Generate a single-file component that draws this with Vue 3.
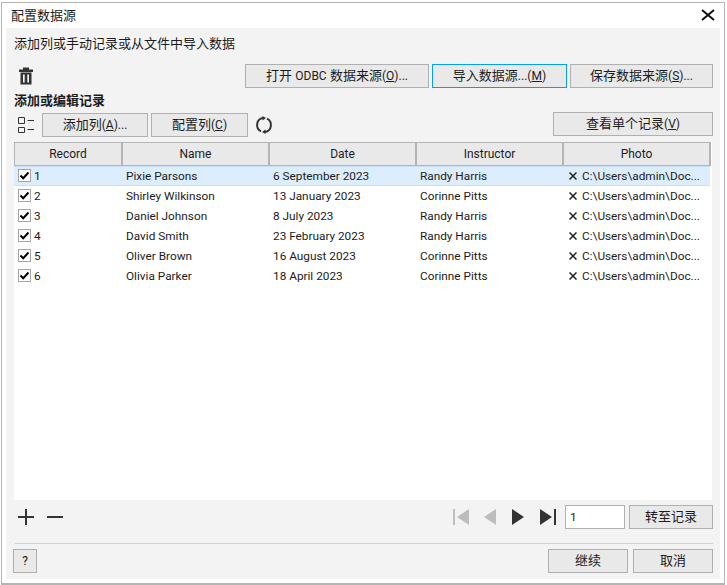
<script setup>
const columns = [
  { label: 'Record', width: 109 },
  { label: 'Name', width: 147 },
  { label: 'Date', width: 147 },
  { label: 'Instructor', width: 147 },
  { label: 'Photo', width: 147 }
]
const rows = [
  { id: 1, name: 'Pixie Parsons', date: '6 September 2023', instructor: 'Randy Harris' },
  { id: 2, name: 'Shirley Wilkinson', date: '13 January 2023', instructor: 'Corinne Pitts' },
  { id: 3, name: 'Daniel Johnson', date: '8 July 2023', instructor: 'Randy Harris' },
  { id: 4, name: 'David Smith', date: '23 February 2023', instructor: 'Randy Harris' },
  { id: 5, name: 'Oliver Brown', date: '16 August 2023', instructor: 'Corinne Pitts' },
  { id: 6, name: 'Olivia Parker', date: '18 April 2023', instructor: 'Corinne Pitts' }
]
</script>

<template>
  <div class="window">
    <header class="titlebar">
      <span class="title">配置数据源</span>
      <svg class="close" width="14" height="12" viewBox="0 0 14 12"><path d="M1 1L13 11M13 1L1 11" stroke="#111" stroke-width="2" fill="none" /></svg>
    </header>
    <main class="body">
      <p class="intro">添加列或手动记录或从文件中导入数据</p>
      <div class="source-row">
        <svg class="trash" width="16" height="18" viewBox="0 0 16 18">
          <path d="M1 2.500H15V5H1ZM5 0.500H11V2.500H5Z" fill="#333" />
          <path fill-rule="evenodd" d="M2.500 5.500H13.500V17.500H2.500ZM5 7.500V15.500H6.700V7.500ZM9.300 7.500V15.500H11V7.500Z" fill="#333" />
        </svg>
        <button class="btn odbc">打开 <span class="lat">ODBC</span> 数据来源<span class="lat">(<u>O</u>)...</span></button>
        <button class="btn import">导入数据源<span class="lat">...(<u>M</u>)</span></button>
        <button class="btn save">保存数据来源<span class="lat">(<u>S</u>)...</span></button>
      </div>
      <h2 class="section">添加或编辑记录</h2>
      <div class="tool-row">
        <svg class="list" width="16" height="16" viewBox="0 0 16 16">
          <path d="M0.500 0.500H6.500V6.500H0.500ZM0.500 10.500H6.500V15.500H0.500ZM9.500 3.500H16M9.500 12.500H16" stroke="#333" fill="none" />
        </svg>
        <button class="btn add">添加列<span class="lat">(<u>A</u>)...</span></button>
        <button class="btn config">配置列<span class="lat">(<u>C</u>)</span></button>
        <svg class="refresh" width="18" height="18" viewBox="0 0 18 18">
          <path d="M8 2.100A7 7 0 0 0 6 15.300M12 2.700A7 7 0 0 1 10 15.900" stroke="#333" stroke-width="2" fill="none" />
          <path d="M7.500 0L11 2L7.500 4.500ZM10.500 18L7 16L10.500 13.500Z" fill="#333" />
        </svg>
        <button class="btn single">查看单个记录<span class="lat">(<u>V</u>)</span></button>
      </div>
      <section class="table">
        <div class="thead">
          <div v-for="c in columns" :key="c.label" class="th" :style="{ width: c.width + 'px' }">{{ c.label }}</div>
        </div>
        <div v-for="r in rows" :key="r.id" class="tr" :class="{ selected: r.id === 1 }">
          <div class="td first">
            <svg class="check" width="13" height="13" viewBox="0 0 13 13">
              <rect x="0.500" y="0.500" width="12" height="12" fill="#fff" stroke="#a5a5a5" />
              <path d="M2.500 6.500L5.200 9.200L10.500 3.500" stroke="#000" stroke-width="2" fill="none" />
            </svg>
            <span>{{ r.id }}</span>
          </div>
          <div class="td wide">{{ r.name }}</div>
          <div class="td wide">{{ r.date }}</div>
          <div class="td wide">{{ r.instructor }}</div>
          <div class="td wide photo">
            <svg width="8" height="8" viewBox="0 0 8 8"><path d="M0.500 0.500L7.500 7.500M7.500 0.500L0.500 7.500" stroke="#222" stroke-width="1.500" fill="none" /></svg>
            <span>C:\Users\admin\Doc...</span>
          </div>
        </div>
      </section>
      <div class="nav-row">
        <svg class="plus" width="16" height="16" viewBox="0 0 16 16"><path d="M8 0V16M0 8H16" stroke="#333" stroke-width="2" /></svg>
        <svg class="minus" width="16" height="16" viewBox="0 0 16 16"><path d="M0 8H16" stroke="#333" stroke-width="2" /></svg>
        <div class="spacer"></div>
        <svg class="nav first-nav" width="16" height="16" viewBox="0 0 16 16"><path d="M0 0H2V16H0ZM16 0V16L4 8Z" fill="#bdbdbd" /></svg>
        <svg class="nav prev" width="12" height="16" viewBox="0 0 12 16"><path d="M12 0V16L0 8Z" fill="#bdbdbd" /></svg>
        <svg class="nav next" width="12" height="16" viewBox="0 0 12 16"><path d="M0 0V16L12 8Z" fill="#333" /></svg>
        <svg class="nav last-nav" width="16" height="16" viewBox="0 0 16 16"><path d="M14 0H16V16H14ZM0 0V16L12 8Z" fill="#333" /></svg>
        <input class="page" value="1" />
        <button class="btn goto">转至记录</button>
      </div>
      <div class="footer">
        <button class="btn help"><span class="lat">?</span></button>
        <div class="spacer"></div>
        <button class="btn action">继续</button>
        <button class="btn action">取消</button>
      </div>
    </main>
  </div>
</template>

<style>
html, body { margin: 0; background: #fff; }
</style>

<style scoped>
.window {
  box-sizing: border-box;
  width: 724px;
  height: 583px;
  margin: 2px 0 0 1px;
  border: 1px solid #b4b4b4;
  border-bottom-width: 2px;
  background: #fff;
  display: flex;
  flex-direction: column;
  font: 11.8px Roboto, "Noto Sans CJK SC", sans-serif;
  color: #1c1c1c;
}
.titlebar {
  height: 25px;
  flex: none;
  display: flex;
  align-items: center;
  justify-content: space-between;
  padding: 0 9px;
}
.title { font-size: 13px; line-height: 16px; }
.close { margin-top: -2px; }
.body {
  flex: none;
  width: 714px;
  height: 551px;
  margin-left: 4px;
  box-sizing: border-box;
  background: #f3f3f3;
  padding: 0 7px 0 8px;
  display: flex;
  flex-direction: column;
}
.intro { margin: 7px 0 0; font-size: 13px; line-height: 18px; height: 18px; }
.source-row { display: flex; align-items: center; margin-top: 11px; height: 24px; }
.trash { margin-left: 4px; }
.btn {
  box-sizing: border-box;
  height: 24px;
  padding: 0;
  background: #e9e9e9;
  border: 1px solid #b0b0b0;
  border-radius: 0;
  font: inherit;
  font-size: 13px;
  line-height: 18px;
  color: #1c1c1c;
  white-space: nowrap;
}
.lat { font-size: 12px; }
.odbc { width: 184px; margin-left: 211px; }
.import { width: 135px; margin-left: 3px; border-color: #00a2ed; }
.save { width: 143px; margin-left: 3px; }
.section { margin: 4px 0 0; font-size: 13px; font-weight: 700; line-height: 18px; height: 18px; }
.tool-row { display: flex; align-items: center; height: 24px; margin-top: 3px; }
.list { margin-left: 4px; }
.add { width: 106px; margin-left: 8px; }
.config { width: 97px; margin-left: 3px; }
.refresh { margin-left: 7px; }
.single { width: 160px; margin-left: auto; position: relative; top: -1px; }
.table {
  margin-top: 5px;
  width: 698px;
  height: 358px;
  background: #fff;
}
.thead { display: flex; height: 24px; }
.th {
  box-sizing: border-box;
  background: #e9e9e9;
  border-top: 1px solid #b4b4b4;
  border-bottom: 1px solid #b4b4b4;
  border-right: 2px solid #b4b4b4;
  text-align: center;
  font-size: 12px;
  line-height: 22px;
}
.th:first-child { border-left: 1px solid #b4b4b4; }
.tr { display: flex; height: 20px; box-sizing: border-box; width: 696px; }
.tr.selected { background: #dcedfd; border-top: 1px solid #c8e0fb; border-bottom: 1px solid #c8e0fb; }
.td { line-height: 20px; white-space: nowrap; display: flex; align-items: center; }
.first { width: 108px; padding-left: 4px; box-sizing: border-box; gap: 3px; }
.wide { width: 147px; padding-left: 4px; box-sizing: border-box; }
.photo { gap: 5px; padding-left: 6px; }
.check { flex: none; margin-bottom: 1px; }
.nav-row { display: flex; align-items: center; height: 24px; margin-top: 5px; }
.plus { margin-left: 4px; }
.minus { margin-left: 13px; }
.spacer { flex: 1; }
.nav { flex: none; }
.prev { margin-left: 15px; }
.next { margin-left: 16px; }
.last-nav { margin-left: 16px; }
.page {
  box-sizing: border-box;
  width: 60px;
  height: 24px;
  margin: 0 0 0 9px;
  padding: 0 4px;
  border: 1px solid #b0b0b0;
  background: #fff;
  font: inherit;
  color: #1c1c1c;
  outline: none;
}
.goto { width: 84px; margin-left: 4px; }
.footer {
  display: flex;
  align-items: center;
  margin: 14px 0 0 1px;
  border-top: 1px solid #d2d2d2;
  padding-top: 5px;
}
.help { width: 24px; margin-left: -2px; }
.action { width: 80px; margin-left: 5px; }
</style>
